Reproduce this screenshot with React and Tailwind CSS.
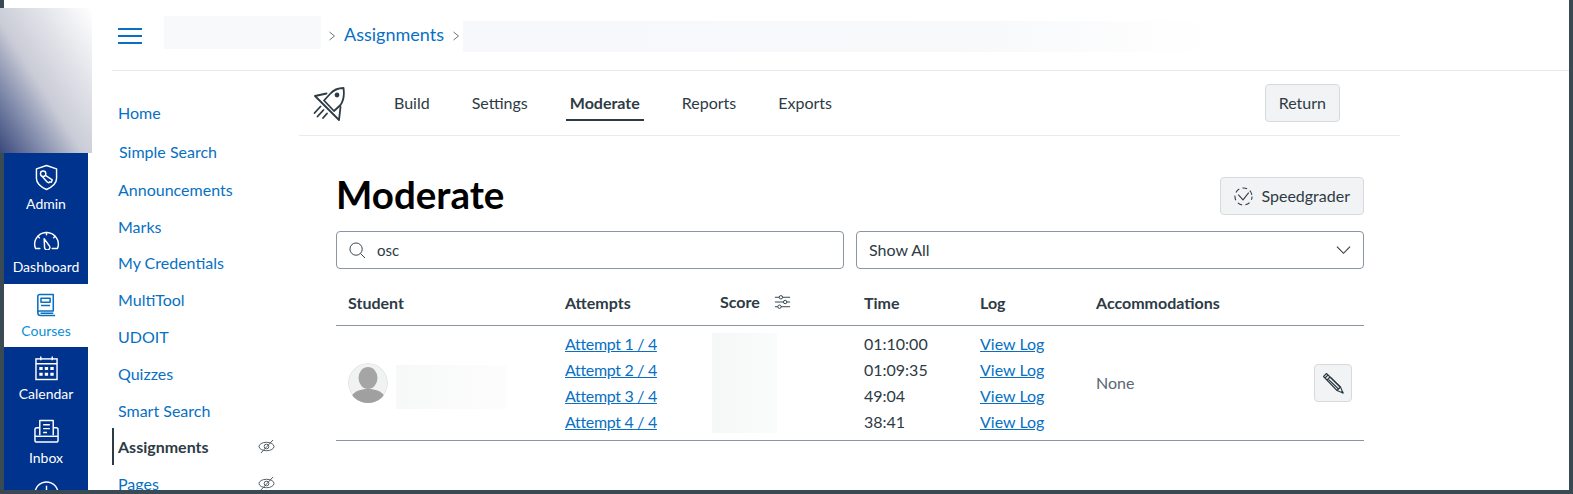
const courseLinks = [
  { label: "Home", cls: "" },
  { label: "Simple Search", cls: "mt-[2px] pl-[7px]" },
  { label: "Announcements", cls: "mt-px" },
  { label: "Marks", cls: "" },
  { label: "My Credentials", cls: "-mt-px" },
  { label: "MultiTool", cls: "" },
  { label: "UDOIT", cls: "" },
  { label: "Quizzes", cls: "" },
  { label: "Smart Search", cls: "" },
];

const attempts = [
  { name: "Attempt 1 / 4", time: "01:10:00" },
  { name: "Attempt 2 / 4", time: "01:09:35" },
  { name: "Attempt 3 / 4", time: "49:04" },
  { name: "Attempt 4 / 4", time: "38:41" },
];

const AdminIcon = () => (
  <svg viewBox="0 0 24 28" className="h-[27px] w-[23px]" fill="none" stroke="currentColor" strokeWidth="1.5" strokeLinejoin="round">
    <path d="M12 1.5 22.5 5V15c0 5-4 8.5-10.5 11.5C5.5 23.5 1.5 20 1.5 15V5Z" />
    <circle cx="8.5" cy="10" r="2.8" />
    <path d="M10.5 11.5 18 16.5 17 19l-1.5-.5-1 1-1-.5-1-.5L7.5 13" />
  </svg>
);

const DashIcon = () => (
  <svg viewBox="0 0 28 20" className="h-[19px] w-[27px]" fill="none" stroke="currentColor" strokeWidth="1.5" strokeLinecap="round" strokeLinejoin="round">
    <path d="M7 18.5H2.5A11.5 11.5 0 0 1 1.5 14 12.5 12.5 0 0 1 26.5 14a11.5 11.5 0 0 1-1 4.5H20" />
    <path d="M11.5 8 16.5 15a2.8 2.8 0 1 1-4.5 2.5Z" />
    <path d="M14 1.5V4M5 5.5l1.5 1.5M23 5.5 21.5 7" />
  </svg>
);

const BookIcon = () => (
  <svg viewBox="0 0 22 26" className="mt-[4px] h-[25px] w-[20px]" fill="none" stroke="currentColor" strokeWidth="1.7" strokeLinejoin="round">
    <path d="M2 21V3a2 2 0 0 1 2-2h15v18H4a2 2 0 0 0-2 2 3 3 0 0 0 3 3h16" />
    <rect x="5.5" y="5" width="10" height="4.5" />
    <path d="M5.5 13h10M5 21.5h14" />
  </svg>
);

const CalendarIcon = () => (
  <svg viewBox="0 0 24 26" className="mt-[2px] h-[26px] w-[23px]" fill="none" stroke="currentColor" strokeWidth="1.5">
    <rect x="1" y="3.5" width="22" height="21.5" />
    <path d="M1 8.5h22M6 1v4M18 1v4" />
    <path d="M4.5 12h3.5v3H4.5zM10.2 12h3.5v3h-3.5zM16 12h3.5v3H16zM4.5 18h3.5v3H4.5zM10.2 18h3.5v3h-3.5zM16 18h3.5v3H16z" fill="currentColor" stroke="none" />
  </svg>
);

const InboxIcon = () => (
  <svg viewBox="0 0 26 26" className="mt-[2px] h-[25px] w-[25px]" fill="none" stroke="currentColor" strokeWidth="1.5" strokeLinejoin="round">
    <path d="M6 17V1.5h14V17" />
    <path d="M9.5 6h7M9.5 10h7M9.5 14h4" />
    <path d="M6 9H3a2 2 0 0 0-2 2v11a2 2 0 0 0 2 2h20a2 2 0 0 0 2-2V11a2 2 0 0 0-2-2h-3" />
    <path d="M1 18h24" />
  </svg>
);

const HelpIcon = () => (
  <svg viewBox="0 0 26 26" className="h-[25px] w-[25px]" fill="none" stroke="currentColor" strokeWidth="1.5">
    <circle cx="13" cy="13" r="12" />
    <path d="M13 5v10M13 18v2" />
  </svg>
);

const EyeOff = () => (
  <svg viewBox="0 0 18 16" className="h-[15px] w-[17px] text-[#4b5560]" fill="none" stroke="currentColor" strokeWidth="1">
    <ellipse cx="9" cy="8" rx="8" ry="4.5" />
    <circle cx="9" cy="8" r="2.5" />
    <path d="M3 15 16 1" />
  </svg>
);

const Chevron = () => (
  <svg viewBox="0 0 8 10" className="h-[10px] w-[8px] text-[#6b7780]" fill="none" stroke="currentColor" strokeWidth="1">
    <path d="M1.5 1 6.5 5l-5 4" />
  </svg>
);

const RocketIcon = () => (
  <svg viewBox="0 0 33 35" className="h-[35px] w-[33px] text-[#2d3b45]" fill="none" stroke="currentColor" strokeWidth="1.8" strokeLinejoin="round" strokeLinecap="round">
    <path d="M31.5 2C26 2 21.5 4 18 8l-6 6.5 10 10.5 6.5-6C31 15.5 32.5 9 31.5 2Z" />
    <path d="M14.5 7.5 3 10l24 24 1.5-13" />
    <circle cx="25" cy="9" r="1.5" fill="currentColor" />
    <path d="M8.5 20.5 2.5 27M11.5 24l-6 6.5M15 27.5l-4 4.5" />
  </svg>
);

const SpeedgraderIcon = () => (
  <svg viewBox="0 0 22 20" className="h-[19px] w-[21px] text-[#2d3b45]" fill="none" stroke="currentColor" strokeWidth="1.1">
    <circle cx="11" cy="10" r="9" strokeDasharray="5 3.5" strokeDashoffset="1.5" />
    <path d="M5.5 8 10.5 13.5 16.5 6" />
  </svg>
);

const SearchIcon = () => (
  <svg viewBox="0 0 18 18" className="h-[17px] w-[17px] text-[#2d3b45]" fill="none" stroke="currentColor" strokeWidth="1">
    <circle cx="7.5" cy="7.5" r="6.5" />
    <path d="M12.3 12.3 17 17" />
  </svg>
);

const SlidersIcon = () => (
  <svg viewBox="0 0 18 16" className="h-[16px] w-[17px] text-[#2d3b45]" fill="none" stroke="currentColor" strokeWidth="1">
    <path d="M1 3h4.5M9 3h8M1 8h9M13.5 8H17M1 13h3M7.5 13H17" />
    <circle cx="7.3" cy="3" r="1.8" />
    <circle cx="11.8" cy="8" r="1.8" />
    <circle cx="5.8" cy="13" r="1.8" />
  </svg>
);

const PencilIcon = () => (
  <svg viewBox="0 0 22 22" className="h-[22px] w-[22px] text-[#2d3b45]" fill="none" stroke="currentColor" strokeWidth="1.1" strokeLinejoin="round">
    <path d="M1.5 4.5 4.5 1.5 18.5 15 21 21l-6-2.5Z" />
    <path d="M3 6 6 3M5 8l3-3M15 18.5l3.5-3.5" />
    <path d="M6.5 7.5 16.5 17M8.5 5.5 18 15" />
    <path d="M19.5 20 21 21l-.5-1.500Z" fill="currentColor" />
  </svg>
);

const Avatar = () => (
  <svg viewBox="0 0 40 40" className="h-[40px] w-[40px] rounded-full">
    <circle cx="20" cy="20" r="20" fill="#f1f2f2" />
    <circle cx="20" cy="20" r="19.5" fill="none" stroke="#e3e5e5" />
    <ellipse cx="20" cy="15" rx="9.5" ry="11" fill="#a5a5a5" />
    <path d="M3 34c3-6 10-8 17-8s14 2 17 8a20 20 0 0 1-34 0Z" fill="#a0a0a0" />
  </svg>
);

function NavItem({ icon, label, active }) {
  return (
    <div className={`flex h-[63.4px] shrink-0 flex-col items-center pt-[7px] ${active ? "bg-white text-[#0a8fd8]" : "text-white"}`}>
      <div className={`flex h-[26px] items-center ${active ? "text-[#0a6fc0]" : ""}`}>{icon}</div>
      {label && <div className="mt-[4px] text-[14px] leading-[20px]">{label}</div>}
    </div>
  );
}

export default function App() {
  return (
    <div className="relative flex h-[494px] w-[1573px] overflow-hidden bg-[#3a4a55] pb-1 pl-1 pr-1 font-['Lato',sans-serif] text-[16px] text-[#2d3b45]">
      <div className="absolute left-0 top-2 h-[145px] w-[92px] bg-gradient-to-tr from-[#3c4a7c] via-[#c9cbd6] via-45% to-[#ffffff]" />

      <div className="w-[84px] shrink-0 bg-white pt-[153px]">
        <nav className="flex h-full flex-col overflow-hidden bg-[#00338d] pt-1">
          <NavItem icon={<AdminIcon />} label="Admin" />
          <NavItem icon={<DashIcon />} label="Dashboard" />
          <NavItem icon={<BookIcon />} label="Courses" active />
          <NavItem icon={<CalendarIcon />} label="Calendar" />
          <NavItem icon={<InboxIcon />} label="Inbox" />
          <NavItem icon={<HelpIcon />} />
        </nav>
      </div>

      <div className="flex min-w-0 flex-1 flex-col bg-white">
        <div className="pl-6">
          <div className="flex h-[71px] items-start border-b border-[#e8eaec] pt-4">
            <div className="mt-3 flex h-[16px] w-[30px] shrink-0 flex-col justify-between pl-[6px]">
              <div className="h-[2px] bg-[#0770c4]" />
              <div className="h-[2px] bg-[#0770c4]" />
              <div className="h-[2px] bg-[#0770c4]" />
            </div>
            <div className="ml-[22px] h-[33px] w-[157px] bg-[#f8f9fb]" />
            <div className="ml-[7px] mt-[15px]"><Chevron /></div>
            <a className="ml-[8px] mt-[5px] text-[18px] leading-[26px] text-[#0770c4]">Assignments</a>
            <div className="ml-[8px] mt-[15px]"><Chevron /></div>
            <div className="ml-[3px] mt-[5px] h-[31px] w-[750px] bg-gradient-to-r from-[#f7f8fb] via-[#f8f9fb] via-70% to-white" />
          </div>
        </div>

        <div className="flex min-h-0 flex-1 overflow-hidden">
          <aside className="w-[211px] shrink-0 pl-6 pt-[23px]">
            <ul>
              {courseLinks.map((link) => (
                <li key={link.label} className={`flex h-[37px] items-center pl-[6px] text-[#0770c4] ${link.cls}`}>
                  {link.label}
                </li>
              ))}
              <li className="-mt-px flex h-[37px] items-center justify-between border-l-2 border-[#2d3b45] pl-1 pr-[24px] font-bold">
                Assignments
                <EyeOff />
              </li>
              <li className="flex h-[37px] items-center justify-between pl-[6px] pr-[24px] text-[#0770c4]">
                Pages
                <EyeOff />
              </li>
            </ul>
          </aside>

          <main className="w-[1101px] shrink-0">
            <div className="flex h-[65px] items-center border-b border-[#e8eaec] pl-[13px]">
              <RocketIcon />
              <div className="ml-[45px] flex gap-[34px]">
                <div className="px-[4px] pb-[6px] pt-[6px]">Build</div>
                <div className="px-[4px] pb-[6px] pt-[6px]">Settings</div>
                <div className="border-b-2 border-[#2d3b45] px-[4px] pb-[4px] pt-[6px] font-bold">Moderate</div>
                <div className="px-[4px] pb-[6px] pt-[6px]">Reports</div>
                <div className="px-[4px] pb-[6px] pt-[6px]">Exports</div>
              </div>
              <button className="ml-auto mr-[60px] h-[38px] rounded border border-[#d7dadd] bg-[#f2f3f4] px-[13px]">Return</button>
            </div>

            <div className="w-[1065px] pl-[37px] pt-[41px]">
              <div className="flex h-[38px] items-center justify-between">
                <h1 className="pb-[4px] text-[38.5px] font-bold leading-[38px] text-black">Moderate</h1>
                <button className="flex h-[38px] items-center gap-[7px] rounded border border-[#d7dadd] bg-[#f2f3f4] pl-[12px] pr-[13px]">
                  <SpeedgraderIcon />
                  Speedgrader
                </button>
              </div>

              <div className="mt-[16px] grid grid-cols-2 gap-3">
                <div className="flex h-[38px] items-center gap-[11px] rounded border border-[#8b96a1] px-3">
                  <SearchIcon />
                  <span className="text-[15px]">osc</span>
                </div>
                <div className="flex h-[38px] items-center justify-between rounded border border-[#8b96a1] px-3">
                  Show All
                  <svg viewBox="0 0 16 10" className="h-[10px] w-[15px]" fill="none" stroke="currentColor" strokeWidth="1.2">
                    <path d="M1 1.5 8 8.5l7-7" />
                  </svg>
                </div>
              </div>

              <div className="mt-[13px] grid grid-cols-[217px_155px_144px_116px_116px_1fr] border-b border-[#8b96a1]">
                <div className="col-span-6 grid h-[44px] grid-cols-subgrid items-center border-b border-[#8b96a1] pb-[2px] font-bold">
                  <div className="pl-3">Student</div>
                  <div className="pl-3">Attempts</div>
                  <div className="flex items-center gap-[14px] pb-[2px] pl-3">
                    Score
                    <SlidersIcon />
                  </div>
                  <div className="pl-3">Time</div>
                  <div className="pl-3">Log</div>
                  <div className="pl-3">Accommodations</div>
                </div>

                <div className="flex items-center pl-3">
                  <Avatar />
                  <div className="ml-2 mt-2 h-[44px] w-[111px] bg-gradient-to-r from-[#f7f8f8] to-[#fdfdfd]" />
                </div>
                <div className="py-[5px] pl-3">
                  {attempts.map((a) => (
                    <a key={a.name} className="block h-[26px] leading-[26px] tracking-[-0.02em] text-[#0770c4] underline">{a.name}</a>
                  ))}
                </div>
                <div className="py-[7px] pl-[2px]">
                  <div className="ml-[2px] h-[100px] w-[65px] bg-gradient-to-r from-[#f6f7f7] to-[#fafbfb]" />
                </div>
                <div className="py-[5px] pl-3">
                  {attempts.map((a) => (
                    <div key={a.time} className="h-[26px] leading-[26px]">{a.time}</div>
                  ))}
                </div>
                <div className="py-[5px] pl-3">
                  {attempts.map((a) => (
                    <a key={a.name} className="block h-[26px] leading-[26px] text-[#0770c4] underline">View Log</a>
                  ))}
                </div>
                <div className="flex items-center justify-between pl-3 pr-3">
                  <span className="text-[#5a6670]">None</span>
                  <button className="flex h-[38px] w-[38px] items-center justify-center rounded border border-[#d7dadd] bg-[#f2f3f4]">
                    <PencilIcon />
                  </button>
                </div>
              </div>
            </div>
          </main>
        </div>
      </div>
    </div>
  );
}
